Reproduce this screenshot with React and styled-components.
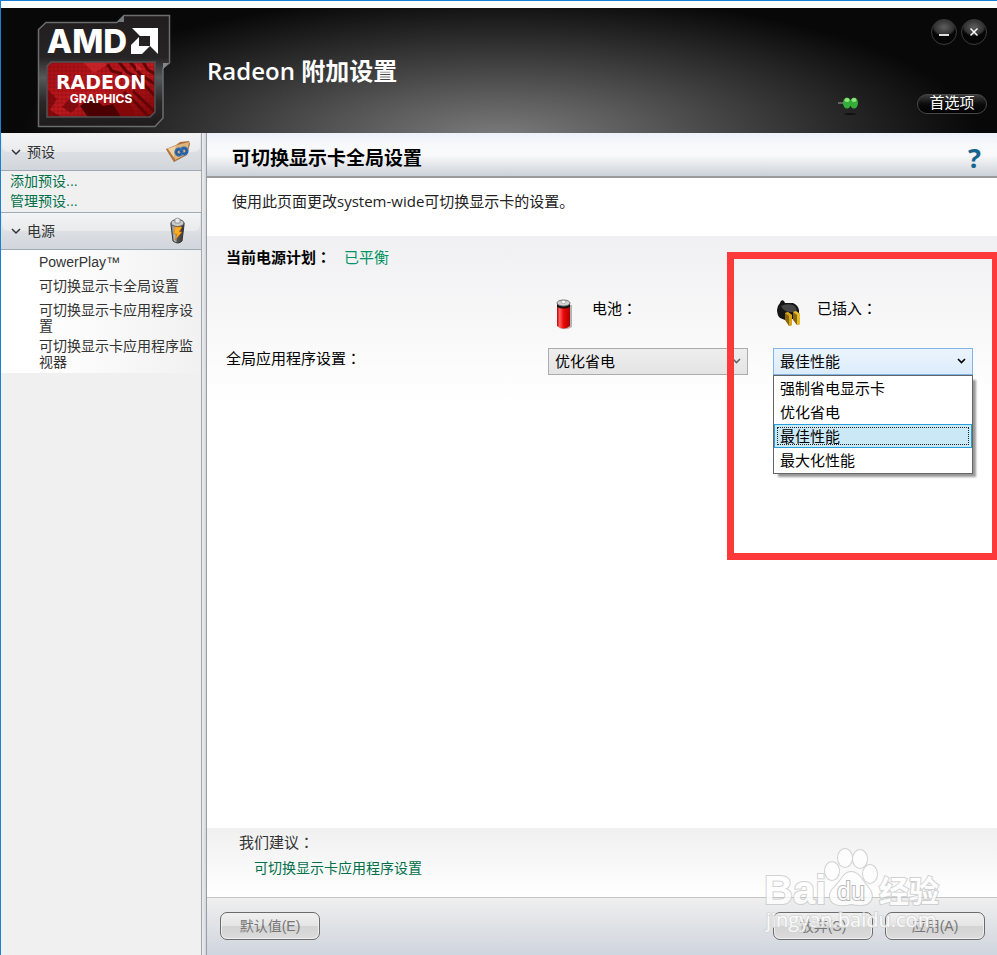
import React, { useState } from "react";
import styled, { createGlobalStyle, css } from "styled-components";

const GlobalStyle = createGlobalStyle`
  * {
    box-sizing: border-box;
  }
  body {
    margin: 0;
    color: #000;
    background: #fff;
    font-family: "Open Sans", "Noto Sans CJK SC", sans-serif;
    font-size: 15px;
    line-height: 20px;
  }
  a {
    color: #00704a;
    text-decoration: none;
  }
`;

const Window = styled.div`
  position: relative;
  display: flex;
  flex-direction: column;
  min-height: 100vh;
  border-top: 1px solid #1a7fd6;
  border-left: 1px solid #1a7fd6;
  overflow: hidden;
`;

const Header = styled.header`
  display: flex;
  align-items: center;
  height: 125px;
  margin-top: 7px;
  padding: 0 10px 0 35px;
  background: radial-gradient(
    ellipse 480px 145px at 50% 104%,
    #7c7c7c 0%,
    #5a5a5a 30%,
    #363636 60%,
    #191919 85%,
    #080808 100%
  );
`;

const AppTitle = styled.h1`
  flex: 1;
  margin: 0 0 0 35px;
  color: #fff;
  font-size: 24px;
  font-weight: 600;
  line-height: 32px;
`;

const PinButton = styled.button`
  align-self: flex-end;
  width: 24px;
  height: 20px;
  margin: 0 56px 18px 0;
  padding: 0;
  border: none;
  background: none;
`;

const HeaderSide = styled.div`
  display: flex;
  flex-direction: column;
  align-items: flex-end;
  justify-content: space-between;
  height: 100%;
  padding: 11px 0 19px;
`;

const WindowButtons = styled.div`
  display: flex;
  gap: 4px;
`;

const RoundButton = styled.button`
  display: flex;
  width: 26px;
  height: 26px;
  padding: 0;
  border: 1px solid #3c3c3c;
  border-radius: 50%;
  background: radial-gradient(ellipse 12px 9px at 50% 30%, #5e5e5e, #333 80%, #050505);
  svg {
    margin: auto;
  }
`;

const PrefButton = styled.button`
  height: 20px;
  width: 70px;
  padding: 0 0 4px;
  border: 1px solid #484848;
  border-radius: 10px;
  color: #fff;
  background: linear-gradient(#3d3d3d, #0b0b0b 50%, #000);
  font: 15px/14px "Noto Sans CJK SC", sans-serif;
  white-space: nowrap;
`;

const Body = styled.div`
  display: flex;
  flex: 1;
`;

const Sidebar = styled.nav`
  width: 201px;
  flex-shrink: 0;
  padding-top: 1px;
  border-right: 1px solid #a0a5aa;
  background: #f0f0f0;
  color: #333;
  font-family: "Liberation Sans", "Noto Sans CJK SC", sans-serif;
  font-size: 14px;
`;

const GroupHeader = styled.button`
  position: relative;
  display: flex;
  align-items: center;
  gap: 6px;
  width: 100%;
  height: 37px;
  padding: 0 10px 0 10px;
  border: none;
  border-bottom: 1px solid #a0a9b4;
  background: linear-gradient(#e6e8ea, #dce0e4 50%, #d1d6dc);
  color: #333;
  font: inherit;
  text-align: left;
  /* glossy upper half */
  &::before {
    content: "";
    position: absolute;
    inset: 0 1px 18px;
    border-radius: 0 0 6px 6px;
    background: linear-gradient(#f3f4f5, #e8eaec);
  }
  span,
  svg {
    position: relative;
  }
  span {
    flex: 1;
  }
`;

const PresetLinks = styled.div`
  display: flex;
  flex-direction: column;
  padding: 0 9px 1px;
  border-bottom: 1px solid #a0a9b4;
`;

const PowerList = styled.ul`
  margin: 0;
  padding: 2px 8px 1px 38px;
  list-style: none;
  line-height: 16px;
  background: linear-gradient(to right, #fff 20%, #f1f1f1);
  li {
    min-height: 24px;
    padding: 2px 0;
  }
  a {
    display: block;
    color: #333;
  }
`;

const Splitter = styled.div`
  width: 5px;
  flex-shrink: 0;
  border-right: 1px solid #999da1;
  background: linear-gradient(to right, #eceef0, #d3d7dc);
`;

const Main = styled.main`
  display: flex;
  flex: 1;
  flex-direction: column;
  min-width: 0;
`;

const PageHead = styled.div`
  display: flex;
  align-items: center;
  justify-content: space-between;
  height: 45px;
  padding: 7px 16px 0 25px;
  border-bottom: 2px solid #9b9b9b;
  background: linear-gradient(#edf1f9 0%, #f8f9fb 30%, #fafafb 50%, #ccd2d9 100%);
`;

const PageTitle = styled.h2`
  margin: 0;
  font-size: 19px;
  font-weight: 600;
  line-height: 24px;
`;

const HelpButton = styled.button`
  padding: 0;
  border: none;
  background: none;
  color: #17658f;
  font: bold 27px/28px "Noto Sans", sans-serif;
`;

const Description = styled.p`
  margin: 0;
  padding: 13px 25px 25px;
  color: #222;
`;

const Panel = styled.section`
  position: relative;
  flex: 1;
  padding: 11px 24px 0 19px;
  background: linear-gradient(#f0f0f2, #fff 170px);
`;

const PlanRow = styled.div`
  display: flex;
  gap: 13px;
  strong {
    font-weight: 700;
  }
  a {
    color: #009363;
  }
`;

const SettingsGrid = styled.div`
  display: grid;
  grid-template-columns: 1fr 200px 200px;
  column-gap: 25px;
  margin-top: 25px;
`;

const SourceLabel = styled.div`
  display: grid;
  grid-template-columns: 44px 1fr;
  height: 56px;
  padding-top: 6px;
`;

const Colon = styled.span`
  font-family: "Noto Sans CJK TC", sans-serif;
`;

const Combo = styled.div`
  position: relative;
`;

const Select = styled.select`
  display: block;
  width: 100%;
  height: 27px;
  padding: 0 6px 2px;
  border: 1px solid #acacac;
  border-radius: 0;
  outline: none;
  appearance: none;
  color: #000;
  background: linear-gradient(#eee, #e4e4e4);
  font: inherit;
  ${(p) =>
    p.$open &&
    css`
      border-color: #7eb4ea;
      background: linear-gradient(#ebf4fc, #dcecfc);
    `}
`;

const ComboArrow = styled.svg`
  position: absolute;
  top: 10px;
  right: 7px;
  pointer-events: none;
`;

const Options = styled.ul`
  position: absolute;
  top: 27px;
  left: 0;
  right: 0;
  margin: 0;
  padding: 0 0 1px;
  list-style: none;
  border: 1px solid #646464;
  background: #fff;
  box-shadow: 4px 4px 2px -1px #999;
`;

const Option = styled.li`
  height: 24px;
  padding: 1px 5px;
  border: 1px solid transparent;
  ${(p) =>
    p.$selected &&
    css`
      border-color: #26a0da;
      background: #cbe8f6;
      outline: 1px dotted #222;
      outline-offset: -4px;
    `}
`;

const RedFrame = styled.div`
  position: absolute;
  top: 16px;
  right: 0;
  width: 270px;
  height: 308px;
  border: 7px solid #fd393a;
  border-right-width: 5px;
  pointer-events: none;
`;

const Advice = styled.section`
  height: 69px;
  padding: 4px 32px;
  background: linear-gradient(#f0f0f1, #fff);
  color: #333;
  a {
    display: block;
    margin: 6px 0 0 15px;
    font-size: 14px;
  }
`;

const Footer = styled.footer`
  display: flex;
  gap: 12px;
  height: 58px;
  padding: 14px 12px 0 13px;
  border-top: 1px solid #c5c5c5;
  background: linear-gradient(#efefef, #cfd5de);
`;

const FooterButton = styled.button`
  width: 100px;
  height: 28px;
  padding: 0;
  border: 1px solid #6b6b6b;
  border-radius: 7px;
  box-shadow: inset 0 0 0 1px #f0f0f0;
  color: #777;
  background: linear-gradient(#f0f0f0, #e4e4e4 50%, #d3d3d3 52%, #dcdcdc);
  font: 14px/20px "Liberation Sans", "Noto Sans CJK SC", sans-serif;
  &:first-child {
    margin-right: auto;
  }
`;

const WatermarkSvg = styled.svg`
  position: absolute;
  right: 47px;
  bottom: 15px;
  pointer-events: none;
`;

const Logo = () => (
  <svg width="136" height="116" viewBox="36 12 136 116" role="img" aria-label="AMD Radeon Graphics">
    <defs>
      <linearGradient id="badge" x1="0" y1="0" x2="0" y2="1">
        <stop offset="0" stopColor="#211d1f" />
        <stop offset="0.38" stopColor="#272425" />
        <stop offset="0.56" stopColor="#56585a" />
        <stop offset="0.78" stopColor="#292728" />
        <stop offset="1" stopColor="#1f1b1d" />
      </linearGradient>
      <linearGradient id="red" x1="0" y1="0" x2="1" y2="1">
        <stop offset="0" stopColor="#a50f14" />
        <stop offset="0.5" stopColor="#c01a20" />
        <stop offset="1" stopColor="#7d0507" />
      </linearGradient>
      <pattern id="mesh" width="4" height="4" patternUnits="userSpaceOnUse">
        <path d="M0 2L2 0L4 2L2 4Z" fill="#6d0608" opacity="0.3" />
      </pattern>
      <clipPath id="redClip">
        <path d="M51 61H155V111L150 116H47V65Z" />
      </clipPath>
    </defs>
    <path
      d="M38.500 28.500L46 21.500H117L124 14.500H169.500V62L163 67V117L155 125.500H38.500Z"
      fill="url(#badge)"
      stroke="#6a6c6e"
      strokeWidth="1.500"
    />
    <path d="M117 21L124 14V21Z" fill="#75787a" />
    <path d="M163 62H169L163 68Z" fill="#85888a" />
    <g clipPath="url(#redClip)">
      <path d="M47 61H155V116H47Z" fill="url(#red)" />
      <path d="M47 61H155V116H47Z" fill="url(#mesh)" />
      <path d="M88 116L80 105L92 95L103 105L113 103L122 116Z" fill="#4b0002" />
      <path d="M113 103L128 97L136 116H121Z" fill="#830709" />
      <path
        d="M47 88L57 98L50 109L62 116H47ZM70 97L79 104L71 112L62 106Z"
        fill="#6c0508"
        opacity="0.7"
      />
      <path
        d="M119 61L127 71L137 76L155 95M130 61L141 74L155 83M143 61L148 69L155 73M124 91L136 102L149 116M133 90L155 111M106 61L112 70L122 73"
        fill="none"
        stroke="#630407"
        strokeWidth="3"
      />
      <path d="M83 61L94 72L105 65L111 61ZM136 63L143 68L136 70Z" fill="#de3035" opacity="0.5" />
    </g>
    <path d="M51 61H155V111L150 116H47V65Z" fill="none" stroke="#515254" strokeWidth="1.500" />
    <g fill="#fff" textAnchor="middle">
      <text x="87" y="52" fontFamily="Inter, sans-serif" fontWeight="800" fontSize="33">
        AMD
      </text>
      <text x="101" y="88" fontFamily="DejaVu Sans, sans-serif" fontWeight="700" fontSize="19">
        RADEON
      </text>
      <text x="101" y="102" fontFamily="Inter, sans-serif" fontWeight="700" fontSize="12">
        GRAPHICS
      </text>
      <path d="M132 27H158V53L150 45V35H140ZM139 36V45H150L142 53H131V44Z" />
    </g>
  </svg>
);

const Chevron = () => (
  <svg width="10" height="8" viewBox="0 0 10 8" fill="none" stroke="#333" strokeWidth="1.500">
    <path d="M1 2L5 6L9 2" />
  </svg>
);

const PresetIcon = () => (
  <svg width="26" height="24" viewBox="0 0 26 24">
    <path d="M1 9L11 5L15 2L24 1L25 4L22 15L9 22Z" fill="#a8703b" />
    <path d="M2 9L12 5L24 2L22 14L10 20Z" fill="#dcb47c" />
    <path d="M2 9L11 6L9 13L9 21Z" fill="#f0d3a5" />
    <path d="M1 9L9 22L10 19L3 9Z" fill="#b3773f" />
    <g fill="none" stroke="#245b9f" strokeWidth="3">
      <circle cx="14" cy="12" r="3" />
      <circle cx="19" cy="11" r="3" />
    </g>
    <g fill="none" stroke="#5ca0db" strokeWidth="0.800" strokeDasharray="1 1">
      <circle cx="14" cy="12" r="4" />
      <circle cx="19" cy="11" r="4" />
    </g>
  </svg>
);

const PowerIcon = () => (
  <svg width="26" height="28" viewBox="0 0 26 28">
    <defs>
      <linearGradient id="cell">
        <stop offset="0" stopColor="#777" />
        <stop offset="0.3" stopColor="#bbb" />
        <stop offset="0.5" stopColor="#555" />
        <stop offset="1" stopColor="#333" />
      </linearGradient>
    </defs>
    <path d="M6 6V8L8 24Q13 28 17 24L19 8V6Z" fill="url(#cell)" stroke="#333" />
    <ellipse cx="12.500" cy="6" rx="6.500" ry="3.500" fill="#c9cbcc" stroke="#555" />
    <path d="M10 2Q12.500 0 15 2V6H10Z" fill="#e9e9e9" stroke="#888" strokeWidth="0.800" />
    <path d="M10 10H17L14 15H17L10 23L12 17H9Z" fill="#ffae20" stroke="#d77913" strokeWidth="0.600" />
  </svg>
);

const BatteryIcon = () => (
  <svg width="34" height="32" viewBox="0 -1 34 32">
    <defs>
      <linearGradient id="battery">
        <stop offset="0" stopColor="#c00000" />
        <stop offset="0.2" stopColor="#ff6060" />
        <stop offset="0.5" stopColor="#ee0808" />
        <stop offset="1" stopColor="#a80000" />
      </linearGradient>
    </defs>
    <path d="M11 6H24V28Q18 32 11 29Z" fill="#999" opacity="0.7" />
    <path d="M9 5H22V27Q15.500 32 9 27Z" fill="url(#battery)" />
    <path d="M9 4H22V8Q15.500 11 9 8Z" fill="#111" />
    <ellipse cx="15.500" cy="4" rx="6.500" ry="3" fill="#d4d4d4" stroke="#777" />
    <ellipse cx="15.500" cy="3" rx="2.500" ry="1.500" fill="#fff" stroke="#999" strokeWidth="0.700" />
  </svg>
);

const PlugIcon = () => (
  <svg width="34" height="32" viewBox="0 -1 34 32">
    <path
      d="M7 4Q8 0 11 2L12 4L20 4Q25 6 26 11V17L20 20L12 21L7 19Q4 16 4 11Q4 7 7 4Z"
      fill="#151515"
    />
    <path d="M8 7Q13 4 20 6Q25 9 23 13L16 13Q10 12 8 7Z" fill="#454545" />
    <path d="M12 14L15 13L19 16V26L16 27L12 21Z" fill="#8b650b" />
    <path d="M20 13L23 12L27 15V25L24 26L20 21Z" fill="#8b650b" />
    <path d="M12 14L15 13L19 16L16 17ZM16 17L19 16V26L16 27Z" fill="#d7a51c" />
    <path d="M20 13L23 12L27 15L24 16ZM24 16L27 15V25L24 26Z" fill="#e5bb2e" />
  </svg>
);

const PinIcon = () => (
  <svg width="24" height="20" viewBox="0 0 24 20">
    <path d="M1 8H7" stroke="#777" strokeWidth="1.500" />
    <ellipse cx="13" cy="19" rx="6" ry="1" fill="#111" />
    <path d="M9 5H17V11H9Z" fill="#24922c" />
    <ellipse cx="10" cy="8" rx="4" ry="5.500" fill="#35ad39" />
    <ellipse cx="17" cy="8" rx="4" ry="5.500" fill="#35ad39" />
    <ellipse cx="10" cy="5" rx="2.500" ry="2" fill="#93e27b" />
    <ellipse cx="17" cy="5" rx="2.500" ry="2" fill="#93e27b" />
  </svg>
);

const Watermark = () => (
  <WatermarkSvg width="190" height="95" viewBox="0 0 190 95">
    <g opacity="0.8" fill="#fff" stroke="#c8c8c8" strokeWidth="2" paintOrder="stroke">
      <ellipse cx="72" cy="26" rx="7" ry="9" />
      <ellipse cx="85" cy="13" rx="7" ry="9" />
      <ellipse cx="100" cy="14" rx="7" ry="9" />
      <ellipse cx="110" cy="29" rx="7" ry="9" />
      <path d="M91 27Q98 27 103 36L110 45Q115 54 107 59Q101 61 91 59Q80 62 73 58Q67 52 72 45L80 36Q85 27 91 27Z" />
      <g fontWeight="700">
        <text x="4" y="59" fontSize="40" fontFamily="Liberation Sans, sans-serif">
          Bai
        </text>
        <text x="119" y="57" fontSize="30" fontFamily="Noto Sans CJK SC, sans-serif">
          经验
        </text>
      </g>
      <text x="77" y="55" fontSize="25" fontFamily="Liberation Sans, sans-serif" stroke="#aaa">
        du
      </text>
      <text
        x="6"
        y="82"
        fontSize="20"
        fontFamily="Open Sans, sans-serif"
        stroke="#d4d4d4"
      >
        jingyan.baidu.com
      </text>
    </g>
  </WatermarkSvg>
);

const modes = ["强制省电显示卡", "优化省电", "最佳性能", "最大化性能"];

const ModeSelect = ({ id, value, onChange, open }) => (
  <Combo>
    <Select id={id} value={value} $open={open} onChange={(e) => onChange(e.target.value)}>
      {modes.map((mode) => (
        <option key={mode}>{mode}</option>
      ))}
    </Select>
    <ComboArrow width="9" height="7" viewBox="0 0 9 7" fill="none">
      <path d="M1 1L4.500 4.500L8 1" stroke={open ? "#000" : "#666"} strokeWidth="1.600" />
    </ComboArrow>
    {open && (
      <Options role="listbox">
        {modes.map((mode) => (
          <Option
            key={mode}
            role="option"
            aria-selected={mode === value}
            $selected={mode === value}
            onClick={() => onChange(mode)}
          >
            {mode}
          </Option>
        ))}
      </Options>
    )}
  </Combo>
);

const App = () => {
  const [battery, setBattery] = useState("优化省电");
  const [plugged, setPlugged] = useState("最佳性能");

  return (
    <Window>
      <GlobalStyle />
      <Header>
        <Logo />
        <AppTitle>Radeon 附加设置</AppTitle>
        <PinButton aria-label="pin">
          <PinIcon />
        </PinButton>
        <HeaderSide>
          <WindowButtons>
            <RoundButton aria-label="minimize">
              <svg width="12" height="12" viewBox="0 0 12 12">
                <path d="M1 9H11" stroke="#ddd" strokeWidth="2" />
              </svg>
            </RoundButton>
            <RoundButton aria-label="close">
              <svg width="10" height="10" viewBox="0 0 10 10">
                <path d="M1.500 1.500L8.500 8.500M8.500 1.500L1.500 8.500" stroke="#fff" strokeWidth="1.500" />
              </svg>
            </RoundButton>
          </WindowButtons>
          <PrefButton>首选项</PrefButton>
        </HeaderSide>
      </Header>
      <Body>
        <Sidebar>
          <GroupHeader>
            <Chevron />
            <span>预设</span>
            <PresetIcon />
          </GroupHeader>
          <PresetLinks>
            <a href="#add">添加预设...</a>
            <a href="#manage">管理预设...</a>
          </PresetLinks>
          <GroupHeader>
            <Chevron />
            <span>电源</span>
            <PowerIcon />
          </GroupHeader>
          <PowerList>
            <li>
              <a href="#powerplay">PowerPlay™</a>
            </li>
            <li>
              <a href="#global">可切换显示卡全局设置</a>
            </li>
            <li>
              <a href="#apps">可切换显示卡应用程序设置</a>
            </li>
            <li>
              <a href="#monitor">可切换显示卡应用程序监视器</a>
            </li>
          </PowerList>
        </Sidebar>
        <Splitter />
        <Main>
          <PageHead>
            <PageTitle>可切换显示卡全局设置</PageTitle>
            <HelpButton>?</HelpButton>
          </PageHead>
          <Description>使用此页面更改system-wide可切换显示卡的设置。</Description>
          <Panel>
            <PlanRow>
              <strong>
                当前电源计划<Colon>：</Colon>
              </strong>
              <a href="#plan">已平衡</a>
            </PlanRow>
            <SettingsGrid>
              <span />
              <SourceLabel>
                <BatteryIcon />
                <label htmlFor="battery">
                  电池<Colon>：</Colon>
                </label>
              </SourceLabel>
              <SourceLabel>
                <PlugIcon />
                <label htmlFor="plugged">
                  已插入<Colon>：</Colon>
                </label>
              </SourceLabel>
              <span>
                全局应用程序设置<Colon>：</Colon>
              </span>
              <ModeSelect id="battery" value={battery} onChange={setBattery} />
              <ModeSelect id="plugged" value={plugged} onChange={setPlugged} open />
            </SettingsGrid>
            <RedFrame />
          </Panel>
          <Advice>
            我们建议<Colon>：</Colon>
            <a href="#apps">可切换显示卡应用程序设置</a>
          </Advice>
          <Footer>
            <FooterButton>默认值(E)</FooterButton>
            <FooterButton>放弃(S)</FooterButton>
            <FooterButton>应用(A)</FooterButton>
          </Footer>
        </Main>
      </Body>
      <Watermark />
    </Window>
  );
};

export default App;
